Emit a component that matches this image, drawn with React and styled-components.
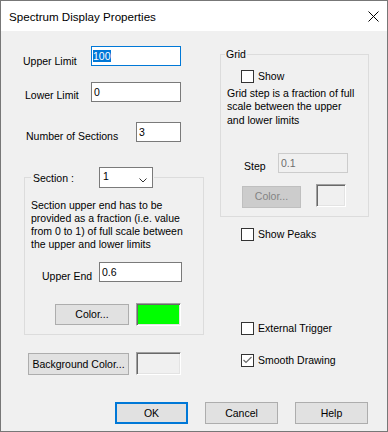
import React from "react";
import styled, { createGlobalStyle } from "styled-components";

const GlobalStyle = createGlobalStyle`
  html, body {
    margin: 0;
    padding: 0;
    background: #ffffff;
  }
  body {
    font-family: "Liberation Sans", Arial, sans-serif;
  }
`;

// Window frame

const Window = styled.div`
  width: 388px;
  height: 432px;
  box-sizing: border-box;
  border: 1px solid #777777;
  background: #f0f0f0;
  display: flex;
  flex-direction: column;
  font-family: "Liberation Sans", Arial, sans-serif;
  font-size: 10.5px;
  line-height: 13px;
  color: #000;
`;

const TitleBar = styled.div`
  height: 30px;
  flex: none;
  background: #ffffff;
  display: flex;
  align-items: center;
  justify-content: space-between;
  padding: 0 8px 0 8px;
  font-size: 11.6px;
`;

const Body = styled.div`
  flex: 1;
  padding: 15px 18px 0 22px;
  display: flex;
  flex-direction: column;
`;

const Columns = styled.div`
  display: flex;
  gap: 16px;
  align-items: flex-start;
`;

const Column = styled.div`
  width: ${(p) => p.$width}px;
  display: flex;
  flex-direction: column;
`;

// Rows and fields

const Row = styled.div`
  display: flex;
  align-items: flex-start;
  margin-top: ${(p) => p.$top || 0}px;
  padding-left: ${(p) => p.$indent || 0}px;
  gap: ${(p) => p.$gap || 0}px;
`;

const FieldLabel = styled.span`
  flex: none;
  width: ${(p) => p.$width}px;
  margin-top: ${(p) => p.$drop}px;
  white-space: nowrap;
`;

const TextBox = styled.div`
  flex: none;
  width: ${(p) => p.$width}px;
  height: 20px;
  box-sizing: border-box;
  border: 1px solid
    ${(p) => (p.$focused ? "#0078d7" : p.$disabled ? "#cccccc" : "#7a7a7a")};
  background: ${(p) => (p.$disabled ? "#f0f0f0" : "#ffffff")};
  color: ${(p) => (p.$disabled ? "#6d6d6d" : "#000")};
  padding: 2px 2px 0 ${(p) => (p.$focused ? 1 : 2)}px;
  line-height: 14px;
  white-space: nowrap;
  overflow: hidden;
`;

const Selection = styled.span`
  background: #0078d7;
  color: #ffffff;
`;

const Paragraph = styled.p`
  margin: ${(p) => p.$top}px 0 0;
  padding-left: 6px;
  line-height: ${(p) => p.$lh || 13}px;
  white-space: nowrap;
`;

// Buttons and swatches

const Button = styled.div`
  flex: none;
  width: ${(p) => p.$width}px;
  height: ${(p) => p.$height || 22}px;
  margin-top: ${(p) => p.$drop || 0}px;
  box-sizing: border-box;
  border: ${(p) => (p.$default ? "2px solid #0078d7" : p.$disabled ? "1px solid #bfbfbf" : "1px solid #adadad")};
  background: ${(p) => (p.$disabled ? "#cccccc" : "#e1e1e1")};
  color: ${(p) => (p.$disabled ? "#838383" : "#000")};
  display: flex;
  align-items: center;
  justify-content: center;
  white-space: nowrap;
`;

const Swatch = styled.div`
  flex: none;
  width: ${(p) => p.$width}px;
  height: 23px;
  box-sizing: border-box;
  border: 1px solid;
  border-color: #a0a0a0 #ffffff #ffffff #a0a0a0;
  box-shadow: inset 1px 1px 0 #696969, inset -1px -1px 0 #e3e3e3;
  background: ${(p) => p.$color};
`;

// Group boxes

const Group = styled.fieldset`
  margin: ${(p) => p.$top || 0}px 0 0 ${(p) => p.$left || 0}px;
  width: ${(p) => p.$width}px;
  box-sizing: border-box;
  min-width: 0;
  padding: 0 0 8px 0;
  border: 1px solid #dcdcdc;
`;

const Legend = styled.legend`
  margin-left: ${(p) => p.$offset}px;
  padding: 0 ${(p) => p.$padRight}px 0 ${(p) => p.$padLeft}px;
  line-height: 14px;
`;

const LegendRow = styled.div`
  display: flex;
  align-items: flex-start;
`;

const LegendLabel = styled.span`
  width: 66px;
  margin-top: 5px;
  line-height: 13px;
`;

const Combo = styled.div`
  width: 54px;
  height: 21px;
  box-sizing: border-box;
  border: 1px solid #7a7a7a;
  background: #ffffff;
  display: flex;
  justify-content: space-between;
  align-items: flex-start;
  padding: 1px 5px 0 3px;
  line-height: 14px;

  svg {
    margin-top: 9px;
  }
`;

// Checkboxes

const CheckRow = styled.div`
  display: flex;
  align-items: center;
  gap: 4px;
  margin-top: ${(p) => p.$top || 0}px;
  padding-left: ${(p) => p.$indent}px;
  white-space: nowrap;
`;

const Box = styled.span`
  width: 13px;
  height: 13px;
  box-sizing: border-box;
  border: 1px solid #333333;
  background: #ffffff;
  display: flex;
  align-items: center;
  justify-content: center;
`;

const ButtonRow = styled.div`
  display: flex;
  justify-content: flex-end;
  gap: 17px;
  margin-top: 27px;
  padding-right: 1px;
`;

const CloseIcon = () => (
  <svg width="11" height="11" viewBox="0 0 11 11">
    <path d="M0.5 0.5 L10.5 10.5 M10.5 0.5 L0.5 10.5" stroke="#000" strokeWidth="1" />
  </svg>
);

const Chevron = () => (
  <svg width="8" height="5" viewBox="0 0 8 5">
    <path d="M0.5 0.5 L4 4 L7.5 0.5" stroke="#333" fill="none" strokeWidth="1" />
  </svg>
);

const CheckBox = ({ checked, label, top, indent }) => (
  <CheckRow $top={top} $indent={indent}>
    <Box>
      {checked && (
        <svg width="11" height="11" viewBox="0 0 11 11">
          <path d="M1.5 5 L4 7.5 L9.5 2" stroke="#6a6a6a" fill="none" strokeWidth="1.2" />
        </svg>
      )}
    </Box>
    <span>{label}</span>
  </CheckRow>
);

// Component

const App = () => {
  return (
    <>
      <GlobalStyle />
      <Window>
        <TitleBar>
          <span>Spectrum Display Properties</span>
          <CloseIcon />
        </TitleBar>
        <Body>
          <Columns>
            <Column $width={181}>
              <Row>
                <FieldLabel $width={68} $drop={9}>Upper Limit</FieldLabel>
                <TextBox $width={90} $focused>
                  <Selection>100</Selection>
                </TextBox>
              </Row>
              <Row $top={14} $indent={2}>
                <FieldLabel $width={66} $drop={7}>Lower Limit</FieldLabel>
                <TextBox $width={90}>0</TextBox>
              </Row>
              <Row $top={20} $indent={3}>
                <FieldLabel $width={110} $drop={8}>Number of Sections</FieldLabel>
                <TextBox $width={45}>3</TextBox>
              </Row>

              <Group $top={24} $left={1} $width={180}>
                <Legend $offset={6} $padLeft={2} $padRight={1}>
                  <LegendRow>
                    <LegendLabel>Section :</LegendLabel>
                    <Combo>
                      <span>1</span>
                      <Chevron />
                    </Combo>
                  </LegendRow>
                </Legend>
                <Paragraph $top={11}>
                  Section upper end has to be
                  <br />
                  provided as a fraction (i.e. value
                  <br />
                  from 0 to 1) of full scale between
                  <br />
                  the upper and lower limits
                </Paragraph>
                <Row $top={11} $indent={17}>
                  <FieldLabel $width={57} $drop={8}>Upper End</FieldLabel>
                  <TextBox $width={83}>0.6</TextBox>
                </Row>
                <Row $top={20} $indent={30} $gap={7}>
                  <Button $width={74} $height={21} $drop={1}>Color...</Button>
                  <Swatch $width={45} $color="#00ff00" />
                </Row>
              </Group>

              <Row $top={17} $indent={5} $gap={7}>
                <Button $width={101} $height={22} $drop={1}>Background Color...</Button>
                <Swatch $width={45} $color="#f0f0f0" />
              </Row>
            </Column>

            <Column $width={149}>
              <Group $top={1} $width={149}>
                <Legend $offset={4} $padLeft={1} $padRight={1}>Grid</Legend>
                <CheckBox label="Show" top={9} indent={20} />
                <Paragraph $top={4} $lh={13.3}>
                  Grid step is a fraction of full
                  <br />
                  scale between the upper
                  <br />
                  and lower limits
                </Paragraph>
                <Row $top={26} $indent={23}>
                  <FieldLabel $width={34} $drop={7}>Step</FieldLabel>
                  <TextBox $width={70} $disabled>0.1</TextBox>
                </Row>
                <Row $top={11} $indent={21} $gap={15}>
                  <Button $width={59} $height={22} $drop={2} $disabled>Color...</Button>
                  <Swatch $width={30} $color="#f0f0f0" />
                </Row>
              </Group>
              <CheckBox label="Show Peaks" top={11} indent={21} />
              <CheckBox label="External Trigger" top={81} indent={21} />
              <CheckBox label="Smooth Drawing" top={19} indent={21} checked />
            </Column>
          </Columns>

          <ButtonRow>
            <Button $width={73} $default>OK</Button>
            <Button $width={73}>Cancel</Button>
            <Button $width={73}>Help</Button>
          </ButtonRow>
        </Body>
      </Window>
    </>
  );
};

export default App;
